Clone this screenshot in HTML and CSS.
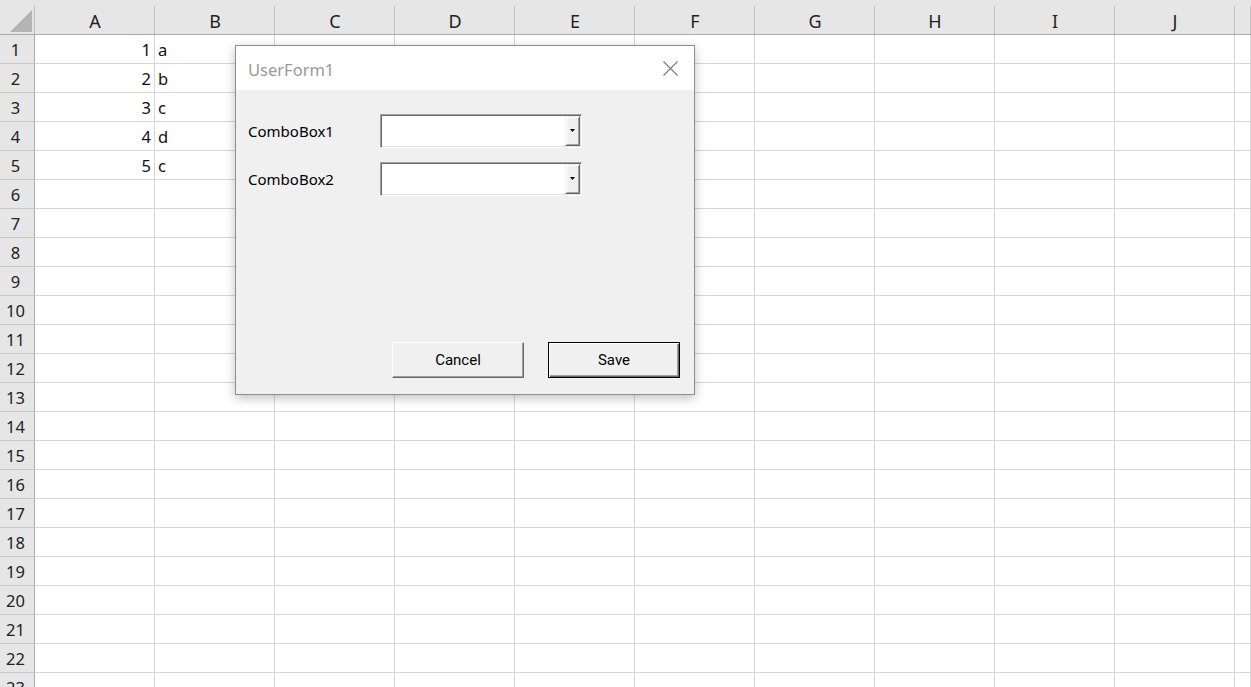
FILE: index.html
```html
<!DOCTYPE html>
<html lang="en">
<head>
<meta charset="utf-8">
<title>Excel UserForm</title>
<link rel="stylesheet" href="styles.css">
</head>
<body>
<div class="sheet">
  <div class="corner"><svg width="22" height="22" viewBox="0 0 22 22"><polygon points="22,0 22,22 0,22" fill="#b4b4b4"/></svg></div>
  <div class="ch">A</div><div class="ch">B</div><div class="ch">C</div><div class="ch">D</div><div class="ch">E</div><div class="ch">F</div><div class="ch">G</div><div class="ch">H</div><div class="ch">I</div><div class="ch">J</div><div class="ch"></div>

  <div class="rh">1</div><div class="c num">1</div><div class="c">a</div><div class="c"></div><div class="c"></div><div class="c"></div><div class="c"></div><div class="c"></div><div class="c"></div><div class="c"></div><div class="c"></div><div class="c"></div>
  <div class="rh">2</div><div class="c num">2</div><div class="c">b</div><div class="c"></div><div class="c"></div><div class="c"></div><div class="c"></div><div class="c"></div><div class="c"></div><div class="c"></div><div class="c"></div><div class="c"></div>
  <div class="rh">3</div><div class="c num">3</div><div class="c">c</div><div class="c"></div><div class="c"></div><div class="c"></div><div class="c"></div><div class="c"></div><div class="c"></div><div class="c"></div><div class="c"></div><div class="c"></div>
  <div class="rh">4</div><div class="c num">4</div><div class="c">d</div><div class="c"></div><div class="c"></div><div class="c"></div><div class="c"></div><div class="c"></div><div class="c"></div><div class="c"></div><div class="c"></div><div class="c"></div>
  <div class="rh">5</div><div class="c num">5</div><div class="c">c</div><div class="c"></div><div class="c"></div><div class="c"></div><div class="c"></div><div class="c"></div><div class="c"></div><div class="c"></div><div class="c"></div><div class="c"></div>
  <div class="rh">6</div><div class="c"></div><div class="c"></div><div class="c"></div><div class="c"></div><div class="c"></div><div class="c"></div><div class="c"></div><div class="c"></div><div class="c"></div><div class="c"></div><div class="c"></div>
  <div class="rh">7</div><div class="c"></div><div class="c"></div><div class="c"></div><div class="c"></div><div class="c"></div><div class="c"></div><div class="c"></div><div class="c"></div><div class="c"></div><div class="c"></div><div class="c"></div>
  <div class="rh">8</div><div class="c"></div><div class="c"></div><div class="c"></div><div class="c"></div><div class="c"></div><div class="c"></div><div class="c"></div><div class="c"></div><div class="c"></div><div class="c"></div><div class="c"></div>
  <div class="rh">9</div><div class="c"></div><div class="c"></div><div class="c"></div><div class="c"></div><div class="c"></div><div class="c"></div><div class="c"></div><div class="c"></div><div class="c"></div><div class="c"></div><div class="c"></div>
  <div class="rh">10</div><div class="c"></div><div class="c"></div><div class="c"></div><div class="c"></div><div class="c"></div><div class="c"></div><div class="c"></div><div class="c"></div><div class="c"></div><div class="c"></div><div class="c"></div>
  <div class="rh">11</div><div class="c"></div><div class="c"></div><div class="c"></div><div class="c"></div><div class="c"></div><div class="c"></div><div class="c"></div><div class="c"></div><div class="c"></div><div class="c"></div><div class="c"></div>
  <div class="rh">12</div><div class="c"></div><div class="c"></div><div class="c"></div><div class="c"></div><div class="c"></div><div class="c"></div><div class="c"></div><div class="c"></div><div class="c"></div><div class="c"></div><div class="c"></div>
  <div class="rh">13</div><div class="c"></div><div class="c"></div><div class="c"></div><div class="c"></div><div class="c"></div><div class="c"></div><div class="c"></div><div class="c"></div><div class="c"></div><div class="c"></div><div class="c"></div>
  <div class="rh">14</div><div class="c"></div><div class="c"></div><div class="c"></div><div class="c"></div><div class="c"></div><div class="c"></div><div class="c"></div><div class="c"></div><div class="c"></div><div class="c"></div><div class="c"></div>
  <div class="rh">15</div><div class="c"></div><div class="c"></div><div class="c"></div><div class="c"></div><div class="c"></div><div class="c"></div><div class="c"></div><div class="c"></div><div class="c"></div><div class="c"></div><div class="c"></div>
  <div class="rh">16</div><div class="c"></div><div class="c"></div><div class="c"></div><div class="c"></div><div class="c"></div><div class="c"></div><div class="c"></div><div class="c"></div><div class="c"></div><div class="c"></div><div class="c"></div>
  <div class="rh">17</div><div class="c"></div><div class="c"></div><div class="c"></div><div class="c"></div><div class="c"></div><div class="c"></div><div class="c"></div><div class="c"></div><div class="c"></div><div class="c"></div><div class="c"></div>
  <div class="rh">18</div><div class="c"></div><div class="c"></div><div class="c"></div><div class="c"></div><div class="c"></div><div class="c"></div><div class="c"></div><div class="c"></div><div class="c"></div><div class="c"></div><div class="c"></div>
  <div class="rh">19</div><div class="c"></div><div class="c"></div><div class="c"></div><div class="c"></div><div class="c"></div><div class="c"></div><div class="c"></div><div class="c"></div><div class="c"></div><div class="c"></div><div class="c"></div>
  <div class="rh">20</div><div class="c"></div><div class="c"></div><div class="c"></div><div class="c"></div><div class="c"></div><div class="c"></div><div class="c"></div><div class="c"></div><div class="c"></div><div class="c"></div><div class="c"></div>
  <div class="rh">21</div><div class="c"></div><div class="c"></div><div class="c"></div><div class="c"></div><div class="c"></div><div class="c"></div><div class="c"></div><div class="c"></div><div class="c"></div><div class="c"></div><div class="c"></div>
  <div class="rh">22</div><div class="c"></div><div class="c"></div><div class="c"></div><div class="c"></div><div class="c"></div><div class="c"></div><div class="c"></div><div class="c"></div><div class="c"></div><div class="c"></div><div class="c"></div>
  <div class="rh">23</div><div class="c"></div><div class="c"></div><div class="c"></div><div class="c"></div><div class="c"></div><div class="c"></div><div class="c"></div><div class="c"></div><div class="c"></div><div class="c"></div><div class="c"></div>
</div>

<div class="dialog">
  <div class="titlebar">
    <span class="title">UserForm1</span>
    <svg class="close" width="15" height="15" viewBox="0 0 15 15"><path d="M0.5 0.5 L14.5 14.5 M14.5 0.5 L0.5 14.5" stroke="#7a7a7a" stroke-width="1.1" fill="none"/></svg>
  </div>
  <div class="body">
    <div class="field">
      <span class="label">ComboBox1</span>
      <div class="combo"><div class="combo-text"></div><div class="drop"><svg width="5" height="3" viewBox="0 0 5 3"><polygon points="0,0 5,0 2.5,3" fill="#000"/></svg></div></div>
    </div>
    <div class="field">
      <span class="label">ComboBox2</span>
      <div class="combo"><div class="combo-text"></div><div class="drop"><svg width="5" height="3" viewBox="0 0 5 3"><polygon points="0,0 5,0 2.5,3" fill="#000"/></svg></div></div>
    </div>
    <div class="actions">
      <button class="btn">Cancel</button>
      <button class="btn default">Save</button>
    </div>
  </div>
</div>
</body>
</html>
```

FILE: styles.css
```css
html, body {
  margin: 0;
  padding: 0;
  overflow: hidden;
  background: #ffffff;
}

body {
  font-family: "Noto Sans", "Liberation Sans", sans-serif;
  color: #1a1a1a;
}

.sheet {
  display: grid;
  grid-template-columns: 35px repeat(10, 120px) 16px;
  grid-template-rows: 35px repeat(23, 29px);
  width: 1251px;
}

.sheet > div {
  box-sizing: border-box;
  overflow: hidden;
  white-space: nowrap;
}

.corner {
  background: linear-gradient(#bdbdbd, #bdbdbd) right bottom / 1px 29px no-repeat, #e6e6e6;
  border-bottom: 1px solid #ababab;
  display: flex;
  justify-content: flex-end;
  align-items: flex-end;
  padding: 0 3px 2px 0;
}

.corner svg {
  display: block;
}

.ch {
  background: linear-gradient(#c0c0c0, #c0c0c0) right bottom / 1px 28px no-repeat, #e6e6e6;
  border-bottom: 1px solid #ababab;
  text-align: center;
  font-size: 18px;
  padding-top: 9px;
  line-height: 25px;
  color: #222222;
}

.rh {
  background: #e6e6e6;
  border-right: 1px solid #ababab;
  border-bottom: 1px solid #c6c6c6;
  text-align: center;
  font-size: 16.5px;
  padding-top: 1px;
  padding-right: 3px;
  line-height: 27px;
  color: #222222;
}

.c {
  border-right: 1px solid #d6d6d6;
  border-bottom: 1px solid #d6d6d6;
  font-size: 16.5px;
  padding: 2px 3px 0 3px;
  line-height: 26px;
  color: #111111;
}

.c.num {
  text-align: right;
}

/* UserForm dialog */
.dialog {
  position: absolute;
  left: 235px;
  top: 45px;
  width: 460px;
  height: 350px;
  box-sizing: border-box;
  border: 1px solid #8e8e8e;
  background: #f0f0f0;
  box-shadow: 0 3px 10px rgba(0, 0, 0, 0.25);
  display: flex;
  flex-direction: column;
}

.titlebar {
  height: 44px;
  flex: none;
  background: #ffffff;
  display: flex;
  align-items: center;
  justify-content: space-between;
  padding: 2px 16px 0 12px;
  box-sizing: border-box;
}

.title {
  font-family: "Noto Sans", sans-serif;
  font-size: 16.5px;
  color: #9a9a9a;
}

.close {
  display: block;
  margin-top: -2px;
}

.body {
  flex: 1;
  display: flex;
  flex-direction: column;
  gap: 14px;
  padding: 24px 14px 16px 12px;
}

.field {
  display: flex;
  align-items: center;
  height: 34px;
}

.label {
  width: 132px;
  font-size: 15px;
  color: #000000;
}

.combo {
  width: 202px;
  height: 34px;
  box-sizing: border-box;
  background: #ffffff;
  border: 1px solid;
  border-color: #a0a0a0 #ffffff #ffffff #a0a0a0;
  box-shadow: inset 1px 1px 0 #696969, inset -1px -1px 0 #e3e3e3;
  padding: 1px;
  display: flex;
}

.combo-text {
  flex: 1;
}

.drop {
  width: 15px;
  box-sizing: border-box;
  background: #f0f0f0;
  border: 1px solid;
  border-color: #f0f0f0 #696969 #696969 #f0f0f0;
  box-shadow: inset 1px 1px 0 #ffffff, inset -1px -1px 0 #a0a0a0;
  display: flex;
  align-items: center;
  justify-content: center;
  padding-bottom: 1px;
}

.drop svg {
  display: block;
}

.actions {
  margin-top: auto;
  display: flex;
  justify-content: flex-end;
  gap: 24px;
}

.btn {
  width: 132px;
  height: 36px;
  box-sizing: border-box;
  margin: 0;
  padding: 0;
  background: #f0f0f0;
  border: 1px solid;
  border-color: #ffffff #696969 #696969 #ffffff;
  box-shadow: inset -1px -1px 0 #a0a0a0;
  font-family: Roboto, "Liberation Sans", sans-serif;
  font-size: 15px;
  color: #000000;
}

.btn.default {
  border: 1px solid #000000;
  box-shadow: inset 1px 1px 0 #ffffff, inset -1px -1px 0 #696969, inset -2px -2px 0 #a0a0a0;
}
```
